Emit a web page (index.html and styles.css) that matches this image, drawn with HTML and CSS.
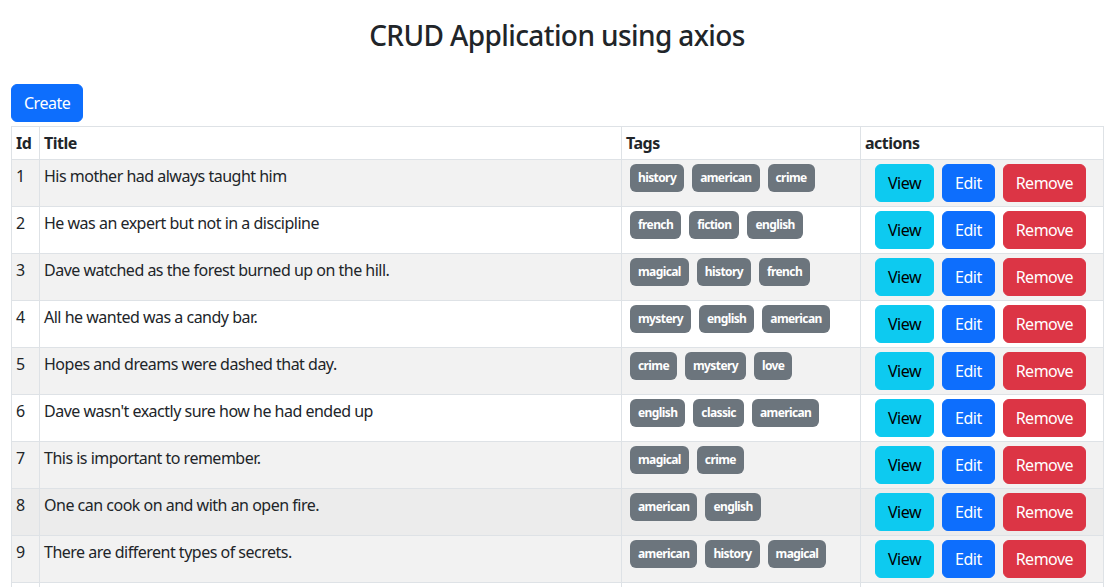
FILE: index.html
```html
<!DOCTYPE html>
<html lang="en">
<head>
<meta charset="utf-8">
<title>CRUD Application using axios</title>
<link rel="stylesheet" href="styles.css">
</head>
<body>
<div class="page">
  <h3 class="title">CRUD Application using axios</h3>
  <div class="toolbar"><button class="btn btn-primary">Create</button></div>
  <table class="grid">
    <colgroup>
      <col class="c-id"><col class="c-title"><col class="c-tags"><col class="c-actions">
    </colgroup>
    <thead>
      <tr><th>Id</th><th>Title</th><th>Tags</th><th>actions</th></tr>
    </thead>
    <tbody>
      <tr class="odd"><td>1</td><td>His mother had always taught him</td><td><span class="badge">history</span><span class="badge">american</span><span class="badge">crime</span></td><td><div class="acts"><button class="btn btn-info">View</button><button class="btn btn-primary">Edit</button><button class="btn btn-danger">Remove</button></div></td></tr>
      <tr><td>2</td><td>He was an expert but not in a discipline</td><td><span class="badge">french</span><span class="badge">fiction</span><span class="badge">english</span></td><td><div class="acts"><button class="btn btn-info">View</button><button class="btn btn-primary">Edit</button><button class="btn btn-danger">Remove</button></div></td></tr>
      <tr class="odd"><td>3</td><td>Dave watched as the forest burned up on the hill.</td><td><span class="badge">magical</span><span class="badge">history</span><span class="badge">french</span></td><td><div class="acts"><button class="btn btn-info">View</button><button class="btn btn-primary">Edit</button><button class="btn btn-danger">Remove</button></div></td></tr>
      <tr><td>4</td><td>All he wanted was a candy bar.</td><td><span class="badge">mystery</span><span class="badge">english</span><span class="badge">american</span></td><td><div class="acts"><button class="btn btn-info">View</button><button class="btn btn-primary">Edit</button><button class="btn btn-danger">Remove</button></div></td></tr>
      <tr class="odd"><td>5</td><td>Hopes and dreams were dashed that day.</td><td><span class="badge">crime</span><span class="badge">mystery</span><span class="badge">love</span></td><td><div class="acts"><button class="btn btn-info">View</button><button class="btn btn-primary">Edit</button><button class="btn btn-danger">Remove</button></div></td></tr>
      <tr><td>6</td><td>Dave wasn't exactly sure how he had ended up</td><td><span class="badge">english</span><span class="badge">classic</span><span class="badge">american</span></td><td><div class="acts"><button class="btn btn-info">View</button><button class="btn btn-primary">Edit</button><button class="btn btn-danger">Remove</button></div></td></tr>
      <tr class="odd"><td>7</td><td>This is important to remember.</td><td><span class="badge">magical</span><span class="badge">crime</span></td><td><div class="acts"><button class="btn btn-info">View</button><button class="btn btn-primary">Edit</button><button class="btn btn-danger">Remove</button></div></td></tr>
      <tr class="hover"><td>8</td><td>One can cook on and with an open fire.</td><td><span class="badge">american</span><span class="badge">english</span></td><td><div class="acts"><button class="btn btn-info">View</button><button class="btn btn-primary">Edit</button><button class="btn btn-danger">Remove</button></div></td></tr>
      <tr class="odd"><td>9</td><td>There are different types of secrets.</td><td><span class="badge">american</span><span class="badge">history</span><span class="badge">magical</span></td><td><div class="acts"><button class="btn btn-info">View</button><button class="btn btn-primary">Edit</button><button class="btn btn-danger">Remove</button></div></td></tr>
      <tr><td>10</td><td>They got there early, and they got really good seats.</td><td><span class="badge">mystery</span><span class="badge">classic</span><span class="badge">crime</span></td><td><div class="acts"><button class="btn btn-info">View</button><button class="btn btn-primary">Edit</button><button class="btn btn-danger">Remove</button></div></td></tr>
    </tbody>
  </table>
</div>
</body>
</html>
```

FILE: styles.css
```css
* { box-sizing: border-box; }
html, body { margin: 0; padding: 0; background: #fff; }
body {
  font-family: "Noto Sans", "Open Sans", "Liberation Sans", sans-serif;
  font-size: 16px;
  line-height: 1.5;
  letter-spacing: -0.5px;
  color: #212529;
}
.page { padding: 0 9px 0 11px; }
.title {
  margin: 19px 0 31px;
  text-align: center;
  font-size: 28px;
  font-weight: 500;
  line-height: 1.2;
  letter-spacing: -0.6px;
}
.toolbar { margin-bottom: 4px; }
.btn {
  display: inline-block;
  font-family: inherit;
  font-size: 16px;
  line-height: 24px;
  letter-spacing: -0.5px;
  padding: 6px 12px;
  border: 1px solid transparent;
  border-radius: 6px;
  cursor: pointer;
}
.btn-primary { background: #0d6efd; border-color: #0d6efd; color: #fff; }
.btn-info { background: #0dcaf0; border-color: #0dcaf0; color: #000; }
.btn-danger { background: #dc3545; border-color: #dc3545; color: #fff; }
.grid {
  width: 1092px;
  table-layout: fixed;
  border-collapse: collapse;
}
.c-id { width: 28px; }
.c-title { width: 582px; }
.c-tags { width: 239px; }
.c-actions { width: 243px; }
.grid th, .grid td {
  border: 1px solid #dee2e6;
  padding: 4px;
  vertical-align: top;
  text-align: left;
}
.grid th { font-weight: 700; }
.grid tr.odd td { background: #f2f2f2; }
.grid tr.hover td { background: #ececec; }
.badge {
  display: inline-block;
  margin: 0 4px;
  padding: 8px;
  font-size: 12px;
  font-weight: 700;
  line-height: 12px;
  letter-spacing: -0.6px;
  color: #fff;
  background: #6c757d;
  border-radius: 6px;
  white-space: nowrap;
}
.acts {
  display: flex;
  gap: 8px;
  padding-left: 10px;
}
```
